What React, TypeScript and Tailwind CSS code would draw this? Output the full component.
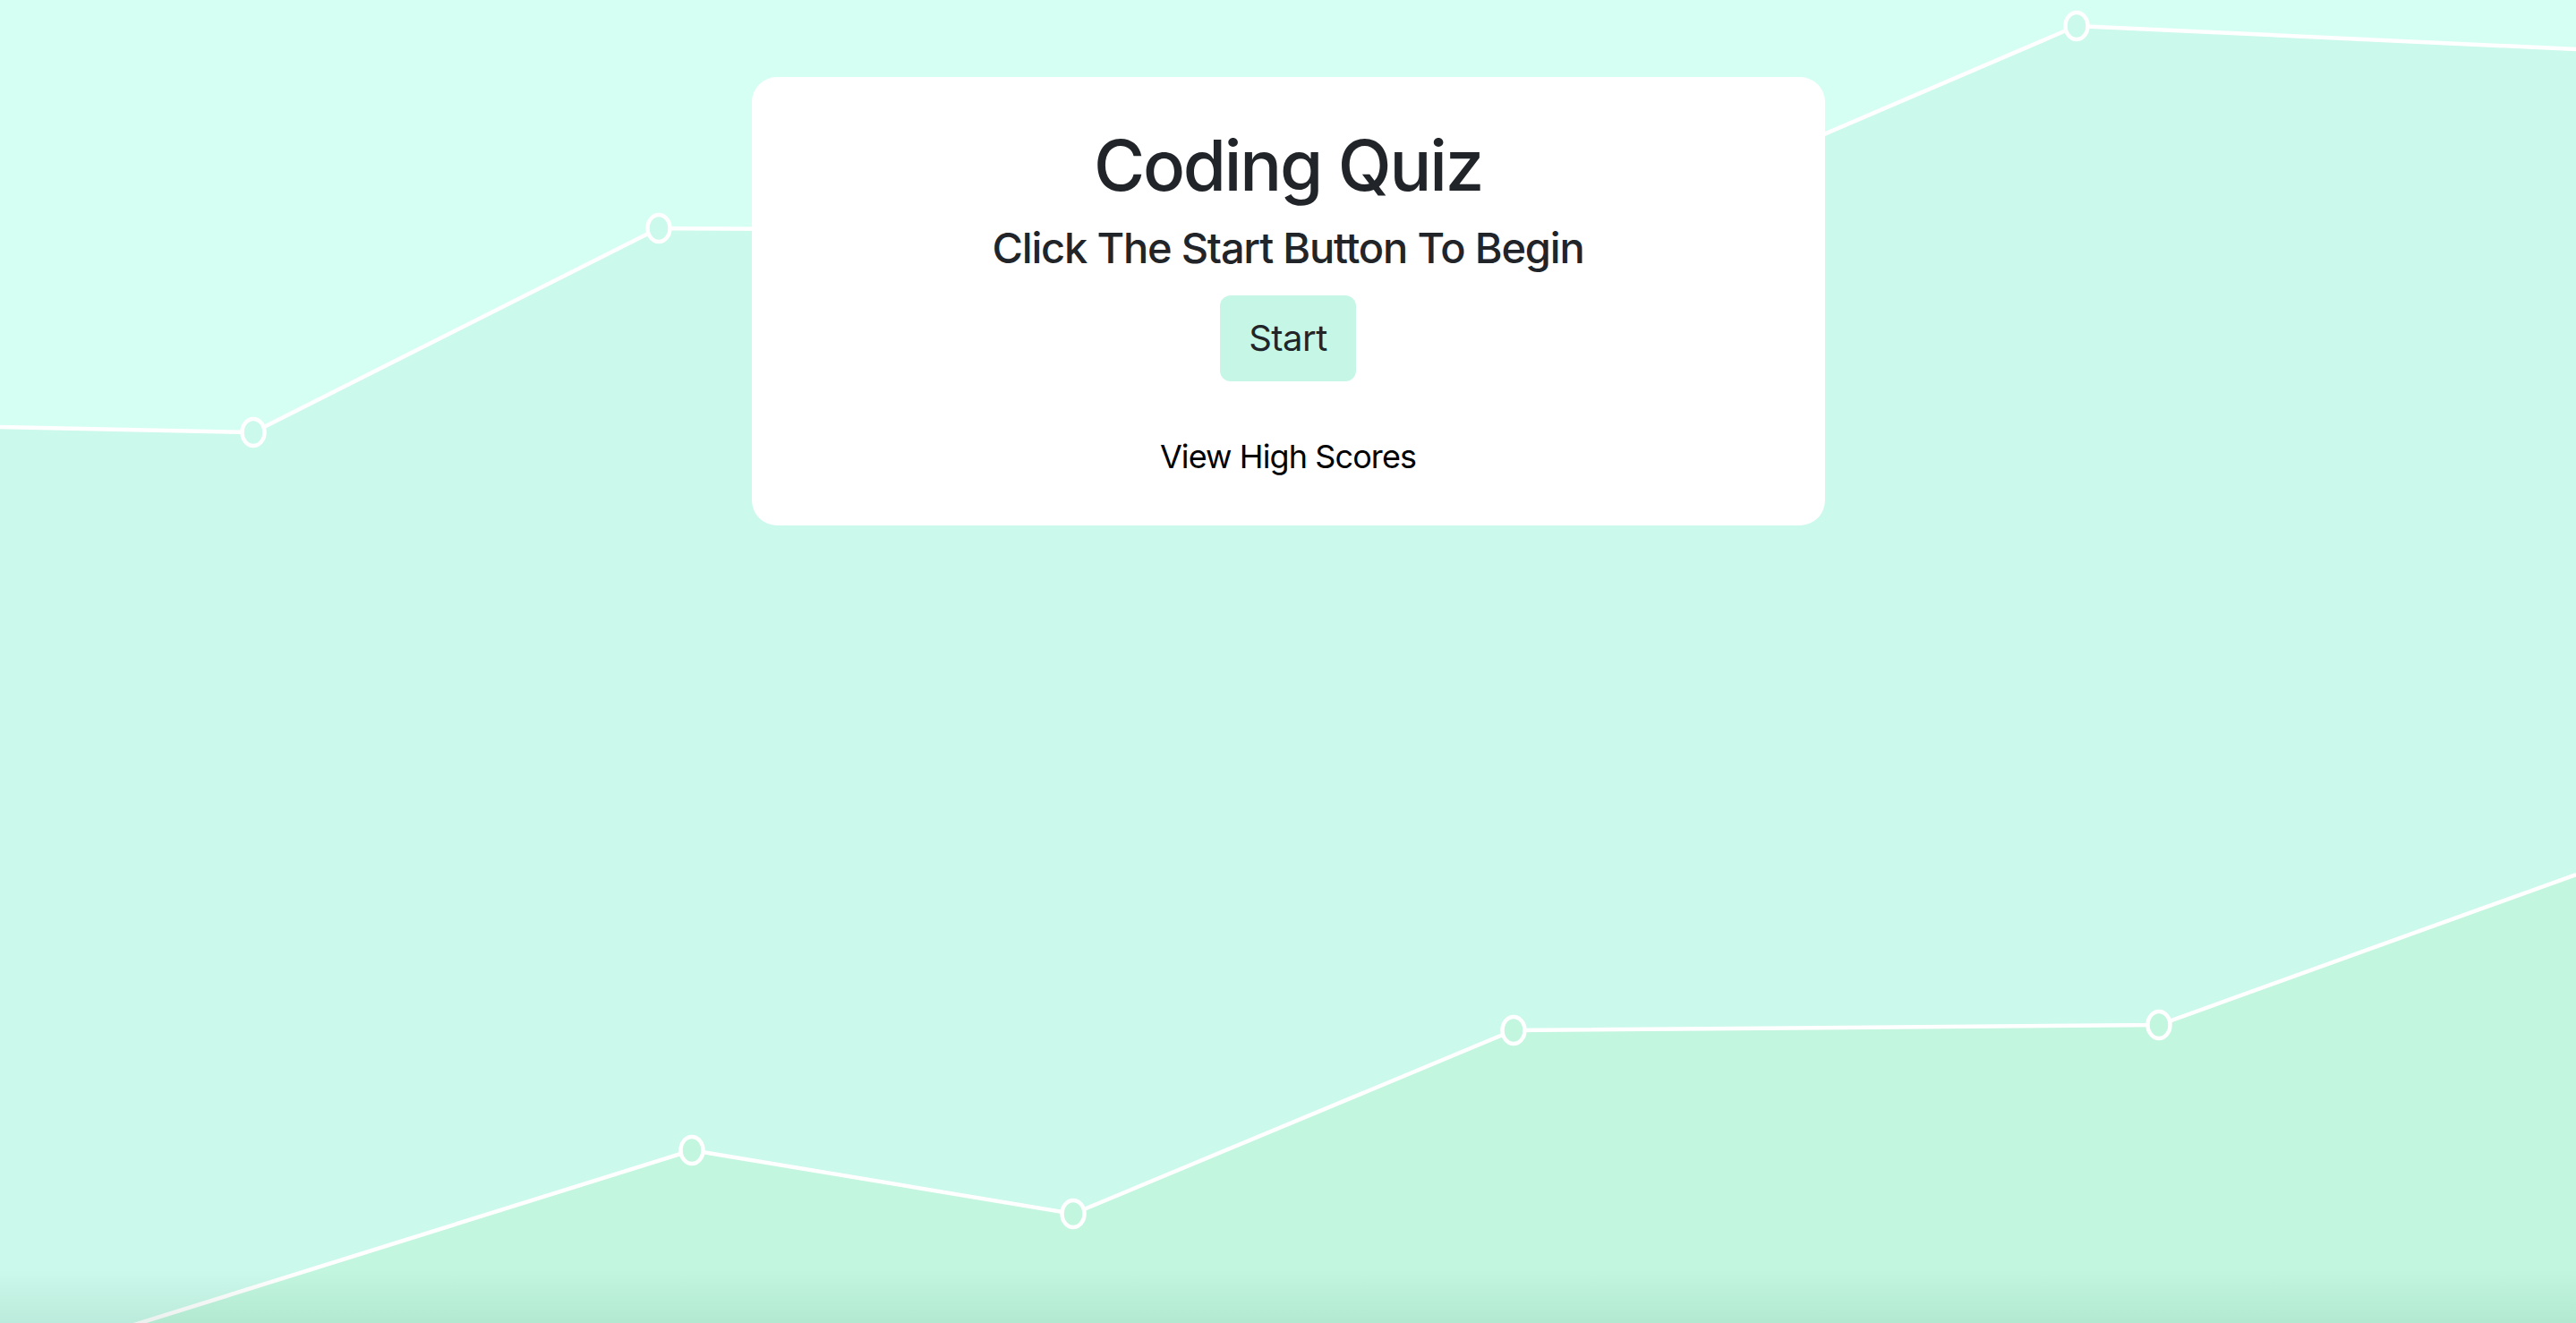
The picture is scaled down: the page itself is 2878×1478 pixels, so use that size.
import React from "react";

const TOP = "#d5fff3";
const MID = "#cbf9eb";
const LOW = "#c2f6df";

const topLine: [number, number][] = [
  [0, 477],
  [283, 483],
  [736, 255],
  [1779, 261],
  [2320, 29],
  [2878, 55],
];

const bottomLine: [number, number][] = [
  [-10, 1530],
  [773, 1285],
  [1199, 1356],
  [1691, 1151],
  [2412, 1145],
  [2878, 977],
];

const toPoints = (pts: [number, number][]) => pts.map((p) => p.join(",")).join(" ");

const WaveBackground = () => {
  return (
    <svg
      className="absolute inset-0 w-full h-full"
      viewBox="0 0 2878 1478"
      preserveAspectRatio="none"
    >
      <rect x="0" y="0" width="2878" height="1478" fill={TOP} />
      <polygon points={`${toPoints(topLine)} 2878,1478 0,1478`} fill={MID} />
      <polygon points={`${toPoints(bottomLine)} 2878,1478 -10,1478`} fill={LOW} />
      <polyline points={toPoints(topLine)} fill="none" stroke="#ffffff" strokeWidth="4.5" />
      <polyline points={toPoints(bottomLine)} fill="none" stroke="#ffffff" strokeWidth="4.5" />
      {topLine.slice(1, -1).map(([x, y], i) => (
        <ellipse key={`t${i}`} cx={x} cy={y} rx="12.5" ry="15" fill={MID} stroke="#ffffff" strokeWidth="4.5" />
      ))}
      {bottomLine.slice(1, -1).map(([x, y], i) => (
        <ellipse key={`b${i}`} cx={x} cy={y} rx="12.5" ry="15" fill={LOW} stroke="#ffffff" strokeWidth="4.5" />
      ))}
    </svg>
  );
};

const App = () => {
  return (
    <div className="relative w-full h-[1478px] overflow-hidden font-['Inter','Helvetica_Neue',sans-serif]">
      <WaveBackground />
      <div className="absolute inset-x-0 bottom-0 h-[60px] bg-gradient-to-t from-[rgba(0,70,40,0.08)] to-transparent" />

      <div className="relative flex justify-center pt-[86px]">
        <div className="w-[1199px] bg-white rounded-[28px] flex flex-col items-center pt-[51px] pb-[50px] text-[#212529]">
          <h1 className="text-[78px] leading-[96px] font-medium tracking-[-2.2px]">Coding Quiz</h1>
          <h4 className="mt-[15px] text-[47px] leading-[58px] font-medium tracking-[-1.2px]">
            Click The Start Button To Begin
          </h4>
          <button className="mt-[24px] h-[96px] w-[152px] rounded-[12px] bg-[#c6f7e6] text-[40px] leading-[60px] tracking-[-0.5px] text-[#212529]">
            Start
          </button>
          <a className="mt-[57px] text-[36px] leading-[54px] tracking-[-0.9px] text-black cursor-pointer">
            View High Scores
          </a>
        </div>
      </div>
    </div>
  );
};

export default App;
